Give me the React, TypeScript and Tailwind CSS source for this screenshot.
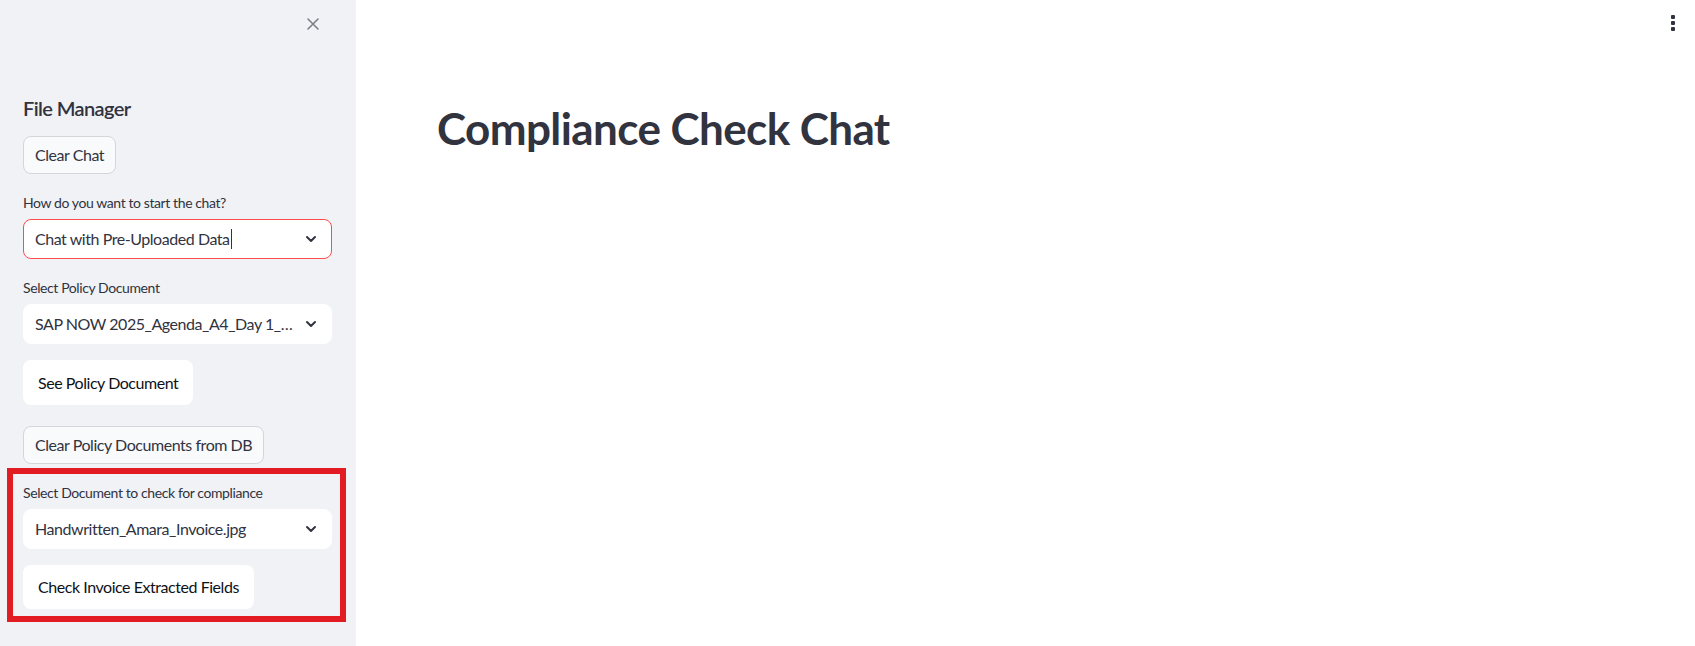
import React from 'react';

const font = { fontFamily: '"Source Sans Pro", Lato, "Noto Sans", sans-serif' };

function Chevron() {
  return (
    <svg width="16" height="16" viewBox="0 0 24 24" fill="none" stroke="#31333f" strokeWidth="3" strokeLinecap="round" strokeLinejoin="round">
      <path d="M6 9l6 6 6-6" />
    </svg>
  );
}

function SelectBox({ value, focused, caret }: { value: string; focused?: boolean; caret?: boolean }) {
  return (
    <div
      className={`flex items-center justify-between h-[40px] w-[309px] rounded-lg bg-white pl-[11px] pr-[12px] ${
        focused ? 'border border-[#ff4b4b]' : 'border border-white'
      }`}
    >
      <span className="text-[16px] tracking-[-0.45px] text-[#31333f] whitespace-nowrap flex items-center">
        {value}
        {caret && <span className="inline-block w-px h-[20px] bg-[#31333f] ml-[1px]" />}
      </span>
      <Chevron />
    </div>
  );
}

function Label({ children }: { children: React.ReactNode }) {
  return <div className="text-[14px] tracking-[-0.4px] text-[#31333f] leading-[20px] mb-[6px]">{children}</div>;
}

export default function App() {
  return (
    <div className="flex w-full h-[646px] bg-white" style={font}>
      <aside className="w-[356px] shrink-0 bg-[#f0f2f6] flex flex-col">
        <div className="flex justify-end pt-[17px] pr-[36px]">
          <svg width="14" height="14" viewBox="0 0 14 14" stroke="#7d7f88" strokeWidth="1.6" strokeLinecap="round">
            <path d="M2 2l10 10M12 2L2 12" />
          </svg>
        </div>

        <div className="px-[23px] pt-[63px]">
          <h2 className="text-[20px] font-semibold tracking-[-0.6px] text-[#31333f] leading-[28px]">File Manager</h2>

          <button className="mt-[14px] h-[38px] px-[11px] rounded-lg border border-[#d5d6da] bg-[#f9fafb] text-[16px] tracking-[-0.45px] text-[#31333f] block">
            Clear Chat
          </button>

          <div className="mt-[19px]">
            <Label>How do you want to start the chat?</Label>
            <SelectBox value="Chat with Pre-Uploaded Data" focused caret />
          </div>

          <div className="mt-[19px]">
            <Label>Select Policy Document</Label>
            <SelectBox value="SAP NOW 2025_Agenda_A4_Day 1_…" />
          </div>

          <button className="mt-[16px] h-[45px] px-[15px] rounded-lg bg-white text-[16px] tracking-[-0.45px] text-[#0e1117] block">
            See Policy Document
          </button>

          <button className="mt-[21px] h-[38px] px-[11px] rounded-lg border border-[#d5d6da] bg-[#f9fafb] text-[16px] tracking-[-0.45px] text-[#31333f] block">
            Clear Policy Documents from DB
          </button>
        </div>

        <div className="mt-[4px] mx-[7px] w-[339px] border-[6px] border-[#e31b23] pt-[9px] pb-[7px] px-[10px]">
          <Label>Select Document to check for compliance</Label>
          <SelectBox value="Handwritten_Amara_Invoice.jpg" />
          <button className="mt-[16px] h-[44px] px-[15px] rounded-lg bg-white text-[16px] tracking-[-0.45px] text-[#0e1117] block">
            Check Invoice Extracted Fields
          </button>
        </div>
      </aside>

      <main className="flex-1 relative">
        <div className="absolute right-[20px] top-[15px] flex flex-col gap-[2px]">
          <span className="w-[4px] h-[4px] bg-[#31333f] rounded-[1px]" />
          <span className="w-[4px] h-[4px] bg-[#31333f] rounded-[1px]" />
          <span className="w-[4px] h-[4px] bg-[#31333f] rounded-[1px]" />
        </div>
        <div className="pl-[81px] pt-[100px]">
          <h1 className="text-[44px] font-bold text-[#31333f] leading-[56px] tracking-[-0.6px]">Compliance Check Chat</h1>
        </div>
      </main>
    </div>
  );
}
